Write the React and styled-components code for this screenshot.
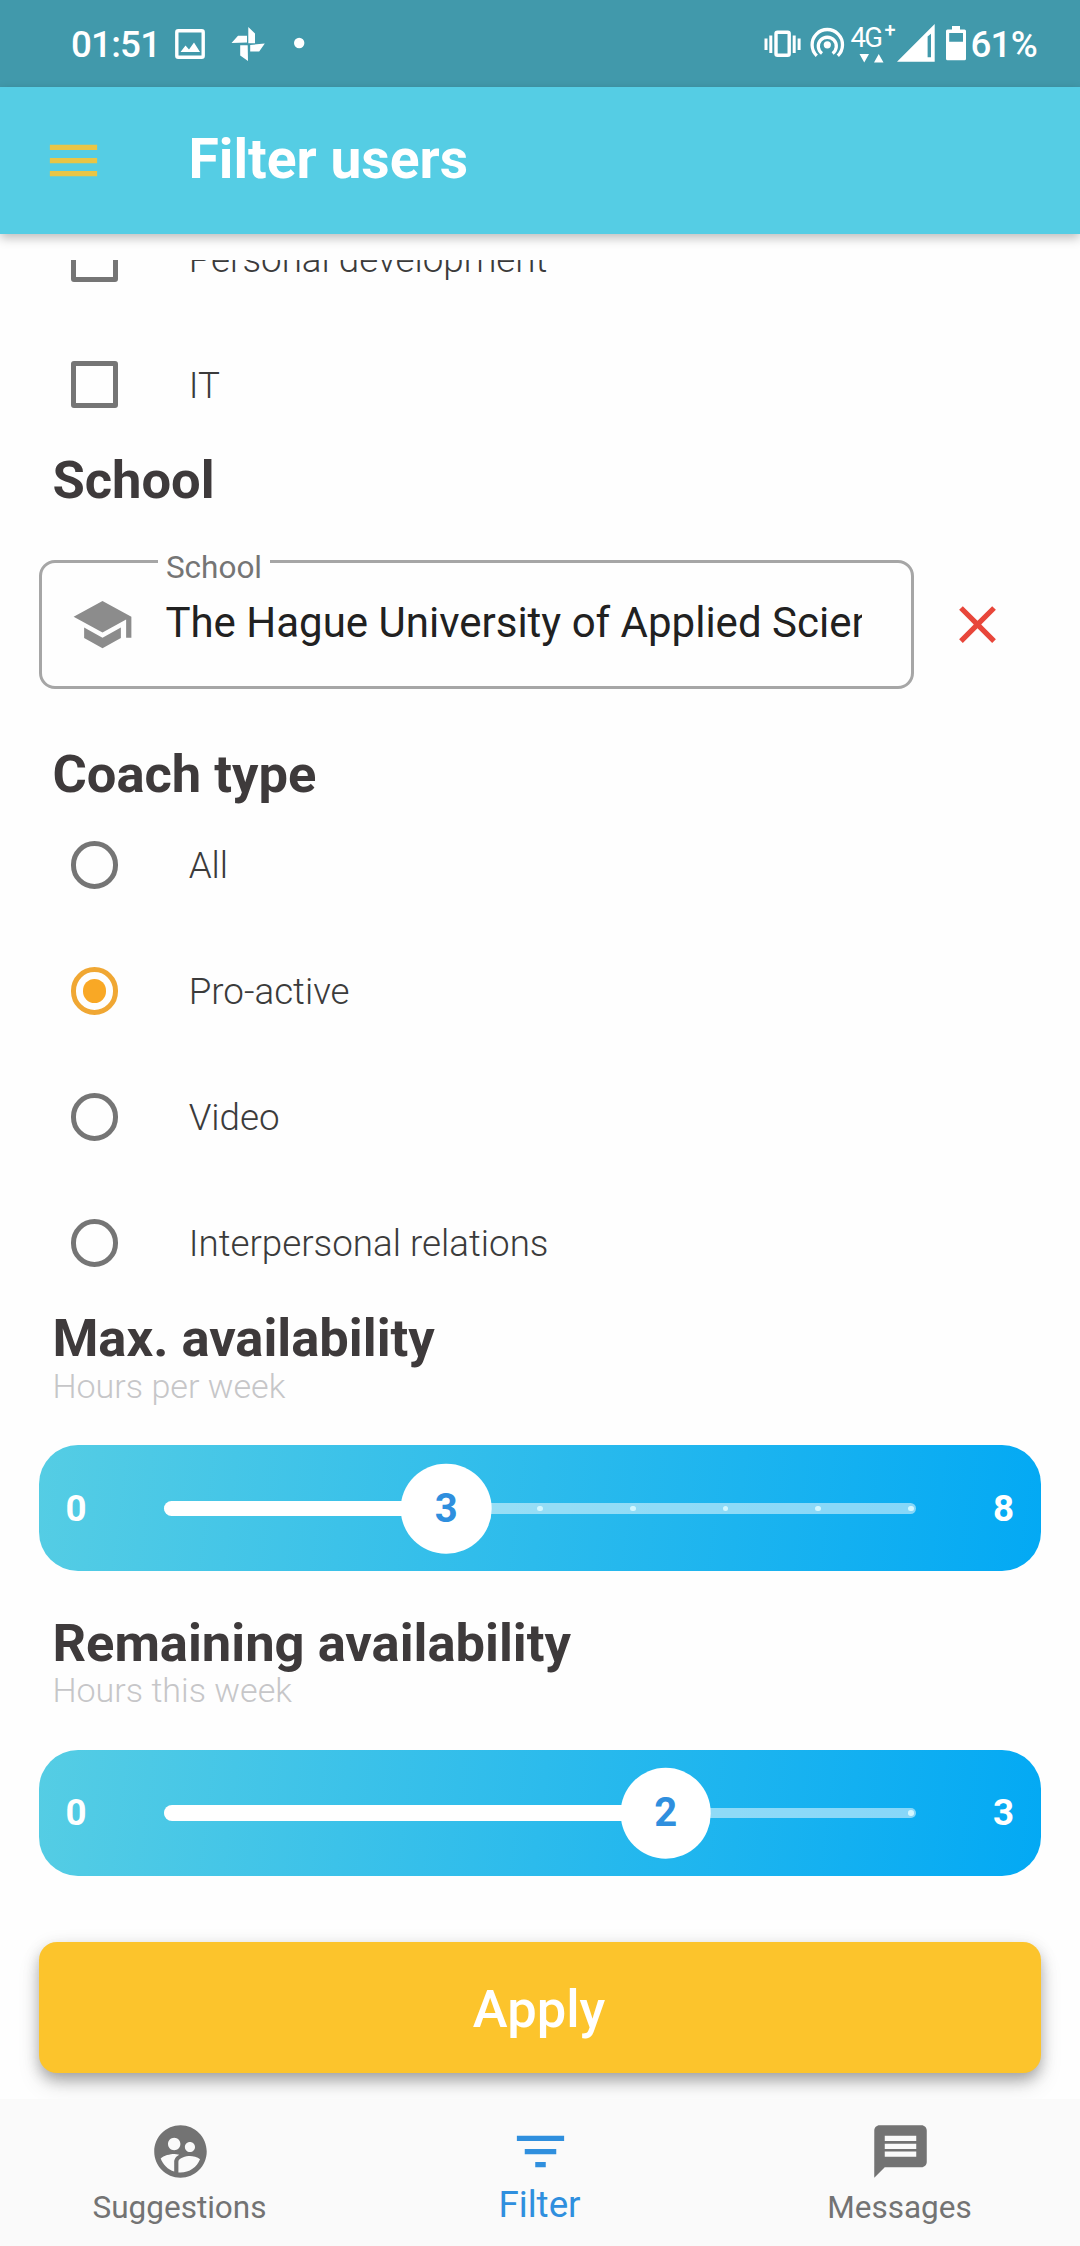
import React from 'react';
import styled, { createGlobalStyle } from 'styled-components';
import {
  MdMenu,
  MdSchool,
  MdClose,
  MdFilterList,
  MdMessage,
  MdSupervisedUserCircle,
} from 'react-icons/md';

const GlobalStyle = createGlobalStyle`
  *, *::before, *::after { box-sizing: border-box; }
  html, body { margin: 0; padding: 0; }
  body { background: #fff; font-family: Roboto, "Liberation Sans", sans-serif; }
  svg { display: block; flex: none; }
`;

const Screen = styled.div`
  display: flex;
  flex-direction: column;
  width: 1080px;
  height: 2246px;
  overflow: hidden;
  background: #fefefe;
`;

const StatusBar = styled.header`
  display: flex;
  justify-content: space-between;
  align-items: flex-start;
  flex: none;
  height: 87px;
  padding: 0 42px 0 71px;
  background: #4199ab;
  color: #fff;
`;

const StatusGroup = styled.div`
  display: flex;
  align-items: center;
  height: 87px;
`;

const StatusText = styled.span`
  width: ${(p) => p.$width}px;
  padding-top: 3px;
  font-size: 36.75px;
  font-weight: 500;
  line-height: 84px;
  letter-spacing: -0.8px;
  white-space: nowrap;
`;

const AppBar = styled.div`
  display: flex;
  align-items: center;
  flex: none;
  height: 147px;
  padding-left: 42px;
  gap: 83.5px;
  background: #55cde4;
  color: #e9c546;
  box-shadow: 0 4px 10px rgba(0, 0, 0, 0.26);
  z-index: 2;
`;

const Title = styled.h1`
  margin: 0;
  padding-bottom: 2px;
  color: #fff;
  font-size: 55.2px;
  font-weight: 700;
  line-height: 145px;
`;

const Viewport = styled.main`
  flex: 1;
  min-height: 0;
  margin-top: 26px;
  overflow: hidden;
`;

const Form = styled.div`
  display: flex;
  flex-direction: column;
  margin-top: -64.5px;
  padding: 0 39.4px;
`;

const Option = styled.label`
  display: flex;
  align-items: center;
  height: 126px;
  padding-left: 31.5px;
  gap: 70.5px;
  color: #3b3b3b;
  font-size: 36.75px;
  font-weight: 300;
`;

const OptionText = styled.span`
  padding-top: 1px;
`;

const CheckMark = styled.span`
  width: 47.25px;
  height: 47.25px;
  border: 5.25px solid #757575;
  border-radius: 3px;
`;

const RadioMark = styled.span`
  display: grid;
  place-items: center;
  width: 47.25px;
  height: 47.25px;
  border: 5.25px solid ${(p) => (p.$on ? '#f0a733' : '#757575')};
  border-radius: 50%;

  &::after {
    content: '';
    width: 23.6px;
    height: 23.6px;
    border-radius: 50%;
    background: ${(p) => (p.$on ? '#f9a825' : 'transparent')};
  }
`;

const Heading = styled.h2`
  margin: ${(p) => p.$top}px 0 ${(p) => p.$bottom || 0}px;
  padding-left: 13px;
  color: #3e3a3b;
  font-size: 52.5px;
  font-weight: 700;
  line-height: 52.5px;
`;

const Caption = styled.p`
  margin: 1px 0 39.5px;
  padding-left: 13px;
  color: #c6c6c8;
  font-size: 34.1px;
  font-weight: 300;
  line-height: 40px;
`;

const FieldRow = styled.div`
  display: flex;
  align-items: center;
  gap: 31.5px;
  margin-top: 54px;
  height: 129px;
  color: #e8463a;
`;

const Field = styled.div`
  position: relative;
  display: flex;
  align-items: center;
  width: 875px;
  height: 129px;
  padding: 0 49px 0 28.5px;
  gap: 31.5px;
  border: 3px solid #a6a6a6;
  border-radius: 16px;
  color: #8c8c8c;
`;

const FieldLabel = styled.span`
  position: absolute;
  top: -15px;
  left: 116px;
  padding: 0 8px 0 7.5px;
  background: #fefefe;
  color: #757575;
  font-size: 31.5px;
  line-height: 40px;
`;

const FieldValue = styled.span`
  flex: 1;
  min-width: 0;
  padding-bottom: 4px;
  overflow: hidden;
  white-space: nowrap;
  color: #212121;
  font-size: 42px;
  line-height: 60px;
`;

const SliderBox = styled.div`
  display: grid;
  grid-template-columns: 98.5px 752.6px 1fr;
  align-items: center;
  height: 126px;
  padding: 0 26.5px 0 26px;
  border-radius: 39px;
  background: linear-gradient(97.2deg, #55cde4, #03a9f4);
`;

const Bound = styled.span`
  color: #fff;
  font-size: 36.75px;
  font-weight: 700;
  line-height: 125px;
  text-align: ${(p) => p.$align || 'left'};
`;

const Track = styled.div`
  position: relative;
  height: 10.5px;
  margin-top: 1px;
  border-radius: 6px;
  background: rgba(255, 255, 255, 0.5);
`;

const TrackFill = styled.div`
  position: absolute;
  top: -2.6px;
  left: 0;
  height: 15.75px;
  border-radius: 8px;
  background: #fff;
`;

const Tick = styled.i`
  position: absolute;
  top: 2.5px;
  width: 5.5px;
  height: 5.5px;
  margin-left: -2.75px;
  border-radius: 50%;
  background: #d3f7ff;
`;

const Thumb = styled.div`
  position: absolute;
  top: 50%;
  width: 90.6px;
  height: 90.6px;
  border-radius: 50%;
  background: #fff;
  color: #2f8fde;
  font-size: 40px;
  font-weight: 700;
  line-height: 89px;
  text-align: center;
  transform: translate(-50%, -50%);
`;

const ApplyButton = styled.button`
  height: 131px;
  margin-top: 66px;
  padding: 4px 2px 0 0;
  border: 0;
  border-radius: 18px;
  background: #fcc42c;
  box-shadow: 0 8px 14px -2px rgba(0, 0, 0, 0.22), 0 12px 22px rgba(0, 0, 0, 0.13),
    0 3px 18px rgba(0, 0, 0, 0.1);
  color: #fff;
  font-family: inherit;
  font-size: 52.5px;
  font-weight: 500;
`;

const BottomNav = styled.nav`
  display: grid;
  grid-template-columns: repeat(3, 1fr);
  flex: none;
  height: 147px;
  background: #fafafa;
`;

const NavItem = styled.a`
  display: flex;
  flex-direction: column;
  align-items: center;
  padding-top: 21px;
  color: ${(p) => (p.$active ? '#2f8fde' : '#737373')};
  font-size: ${(p) => (p.$active ? 36.75 : 31.5)}px;
  line-height: 44px;

  span {
    margin-top: ${(p) => (p.$active ? 0 : 3)}px;
    padding-right: 1px;
  }
`;

const NetworkBadge = styled.div`
  display: flex;
  flex-direction: column;
  width: 44px;
  height: 87px;
  margin-left: 4px;
  padding-top: 22px;
  font-size: 27.5px;
  line-height: 31px;
  white-space: nowrap;
`;

const NetworkText = styled.div`
  display: flex;
  letter-spacing: -1.6px;

  sup {
    margin: -5px 0 0 3px;
    font-size: 20px;
    font-weight: 500;
    line-height: 26px;
  }
`;

function StatusLeftIcons() {
  return (
    <svg width="150" height="87" viewBox="170 0 150 87" fill="#fff">
      <rect x="176.8" y="30.8" width="26.4" height="26.4" rx="1.5" fill="none" stroke="#fff" strokeWidth="3.4" />
      <path d="M180.5 52l5-6.5 3.5 4 5-7 6 9.5z" />
      <path d="M248.3 27l6.7 6.5v9.8h-6.7z M264.8 43.5l-5.6 8h-9v-6.5z M248 61l-7.8-5.5v-10.3h7.5z M231.5 43l6.5-7.2h9v6.8z" />
      <circle cx="299.2" cy="43" r="5.2" />
    </svg>
  );
}

function VibrateHotspotIcons() {
  return (
    <svg width="84" height="87" viewBox="762 0 84 87" fill="#fff">
      <rect x="775" y="32.2" width="13.2" height="23" rx="1.5" fill="none" stroke="#fff" strokeWidth="3.4" />
      <path d="M763.5 38.5h3v11.5h-3z M768.3 35.5h3v17.5h-3z M791.7 35.5h3v17.5h-3z M796.6 38.5h3v11.5h-3z" />
      <circle cx="826.3" cy="44.8" r="3.6" />
      <g fill="none" stroke="#fff" strokeWidth="3.3">
        <path d="M821 53.5a9 9 0 1 1 10.6 0" />
        <path d="M815.8 55.7a15.2 15.2 0 1 1 21 0" />
      </g>
    </svg>
  );
}

function SignalBatteryIcons() {
  return (
    <svg width="76" height="87" viewBox="896 0 76 87" fill="#fff">
      <path fillRule="evenodd" d="M898 61.7L935.7 24v37.7z M928.6 36.5v20.8h3.4v-23.5z" />
      <path
        fillRule="evenodd"
        d="M953 26h8v3.5h4.5q1.5 0 1.5 1.5v27.8q0 1.5-1.5 1.5h-17q-1.5 0-1.5-1.5V31q0-1.5 1.5-1.5h4.5z M950.2 33v8.8h13.8V33z"
      />
    </svg>
  );
}

function Slider({ value, max }) {
  const filled = `${(value / max) * 100}%`;
  const ticks = [];
  for (let i = value + 1; i <= max; i += 1) ticks.push(i);
  return (
    <SliderBox>
      <Bound>0</Bound>
      <Track>
        {ticks.map((t) => (
          <Tick key={t} style={{ left: 5.6 + (t / max) * 741.3 }} />
        ))}
        <TrackFill style={{ width: filled }} />
        <Thumb style={{ left: filled }}>{value}</Thumb>
      </Track>
      <Bound $align="right">{max}</Bound>
    </SliderBox>
  );
}

const topics = ['Personal development', 'IT'];
const coachTypes = ['All', 'Pro-active', 'Video', 'Interpersonal relations'];

export default function App() {
  return (
    <Screen>
      <GlobalStyle />
      <StatusBar>
        <StatusGroup>
          <StatusText $width={99}>01:51</StatusText>
          <StatusLeftIcons />
        </StatusGroup>
        <StatusGroup>
          <VibrateHotspotIcons />
          <NetworkBadge>
            <NetworkText>
              4G<sup>+</sup>
            </NetworkText>
            <svg width="36" height="10" viewBox="0 0 36 10" fill="#fff">
              <path d="M8.5 1h9.5l-4.75 8.5z M23 9.5h9.5l-4.75-8.5z" />
            </svg>
          </NetworkBadge>
          <SignalBatteryIcons />
          <StatusText $width={67.5}>61%</StatusText>
        </StatusGroup>
      </StatusBar>
      <AppBar>
        <MdMenu size={63} />
        <Title>Filter users</Title>
      </AppBar>
      <Viewport>
        <Form>
          {topics.map((name) => (
            <Option key={name}>
              <CheckMark />
              <OptionText>{name}</OptionText>
            </Option>
          ))}
          <Heading $top={6}>School</Heading>
          <FieldRow>
            <Field>
              <FieldLabel>School</FieldLabel>
              <MdSchool size={63} />
              <FieldValue>The Hague University of Applied Sciences</FieldValue>
            </Field>
            <MdClose size={63} />
          </FieldRow>
          <Heading $top={59} $bottom={1.5}>Coach type</Heading>
          {coachTypes.map((name) => (
            <Option key={name}>
              <RadioMark $on={name === 'Pro-active'} />
              <OptionText>{name}</OptionText>
            </Option>
          ))}
          <Heading $top={6}>Max. availability</Heading>
          <Caption>Hours per week</Caption>
          <Slider value={3} max={8} />
          <Heading $top={45.5}>Remaining availability</Heading>
          <Caption>Hours this week</Caption>
          <Slider value={2} max={3} />
          <ApplyButton>Apply</ApplyButton>
        </Form>
      </Viewport>
      <BottomNav>
        <NavItem>
          <MdSupervisedUserCircle size={63} />
          <span>Suggestions</span>
        </NavItem>
        <NavItem $active>
          <MdFilterList size={63} />
          <span>Filter</span>
        </NavItem>
        <NavItem>
          <MdMessage size={63} />
          <span>Messages</span>
        </NavItem>
      </BottomNav>
    </Screen>
  );
}
